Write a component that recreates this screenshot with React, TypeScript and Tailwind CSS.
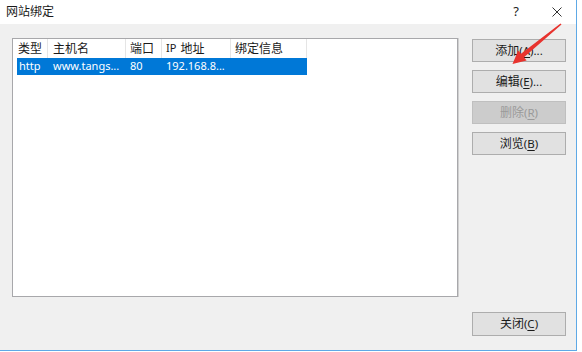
import React from "react";

const font = { fontFamily: '"Noto Sans", "Noto Sans CJK SC", sans-serif' };

function Btn({ label, hot, rest, disabled, h = "h-[23px]" }: { label: string; hot: string; rest: string; disabled?: boolean; h?: string }) {
  return (
    <div
      className={
        "w-[94px] flex items-center justify-center border text-[12px] leading-none " +
        h +
        " " +
        (disabled ? "bg-[#cccccc] border-[#bfbfbf] text-[#9a9a9a]" : "bg-[#e1e1e1] border-[#adadad] text-[#1a1a1a]")
      }
    >
      <span>
        {label}
        <span className="text-[11.5px]">
          (<span className="underline underline-offset-2">{hot}</span>){rest}
        </span>
      </span>
    </div>
  );
}

export default function App() {
  return (
    <div className="w-[582px] h-[352px] bg-white relative overflow-hidden" style={font}>
      <div className="w-[577px] h-[351px] border-r border-b border-[#5ea9e6] flex flex-col">
        <div className="h-[24px] bg-white flex items-center shrink-0">
          <span className="pl-[6px] text-[12px] text-[#1a1a1a]">网站绑定</span>
          <div className="flex-1" />
          <span className="text-[13px] text-[#222] mr-[33px]">?</span>
          <svg width="10" height="10" viewBox="0 0 10 10" className="mr-[14px]">
            <path d="M0.5 0.5 L9.5 9.5 M9.5 0.5 L0.5 9.5" stroke="#333" strokeWidth="1" />
          </svg>
        </div>
        <div className="flex-1 bg-[#f0f0f0] flex pl-[12px] pt-[14px] pr-[10px] pb-[14px]">
          <div className="w-[446px] h-[259px] border border-[#a8a8ab] bg-white shadow-[1px_0_0_#d0d0d0] text-[12px]">
            <div className="flex h-[19px] items-center text-[#1a1a1a]">
              <div className="w-[35px] pl-[5px] border-r border-[#e5e5e5] h-full flex items-center">类型</div>
              <div className="w-[78px] pl-[5px] border-r border-[#e5e5e5] h-full flex items-center">主机名</div>
              <div className="w-[36px] pl-[4px] border-r border-[#e5e5e5] h-full flex items-center">端口</div>
              <div className="w-[69px] pl-[4px] border-r border-[#e5e5e5] h-full flex items-center">
                <span className="text-[11px] mr-[4px]">IP</span>地址
              </div>
              <div className="w-[76px] pl-[4px] border-r border-[#e5e5e5] h-full flex items-center">绑定信息</div>
            </div>
            <div className="ml-[4px] w-[290px] h-[17px] bg-[#0078d7] flex items-center text-white text-[11px]">
              <div className="w-[31px] pl-[2px]">http</div>
              <div className="w-[78px] pl-[5px]">www.tangs...</div>
              <div className="w-[36px] pl-[4px]">80</div>
              <div className="w-[69px] pl-[4px]">192.168.8...</div>
            </div>
          </div>
          <div className="flex-1" />
          <div className="flex flex-col w-[94px]">
            <div className="flex flex-col gap-[8px] pt-[1px]">
              <Btn label="添加" hot="A" rest="..." />
              <Btn label="编辑" hot="E" rest="..." />
              <Btn label="删除" hot="R" rest="" disabled />
              <Btn label="浏览" hot="B" rest="" />
            </div>
            <div className="flex-1" />
            <Btn label="关闭" hot="C" rest="" h="h-[24px]" />
          </div>
        </div>
      </div>
      <svg className="absolute left-0 top-0" width="582" height="352" viewBox="0 0 582 352">
        <polygon
          points="561.5,24.5 524,57.2 526.6,60.4 512.5,64 518.2,50.6 521,53.8 560.5,23.5"
          fill="#e8332e"
        />
      </svg>
    </div>
  );
}
